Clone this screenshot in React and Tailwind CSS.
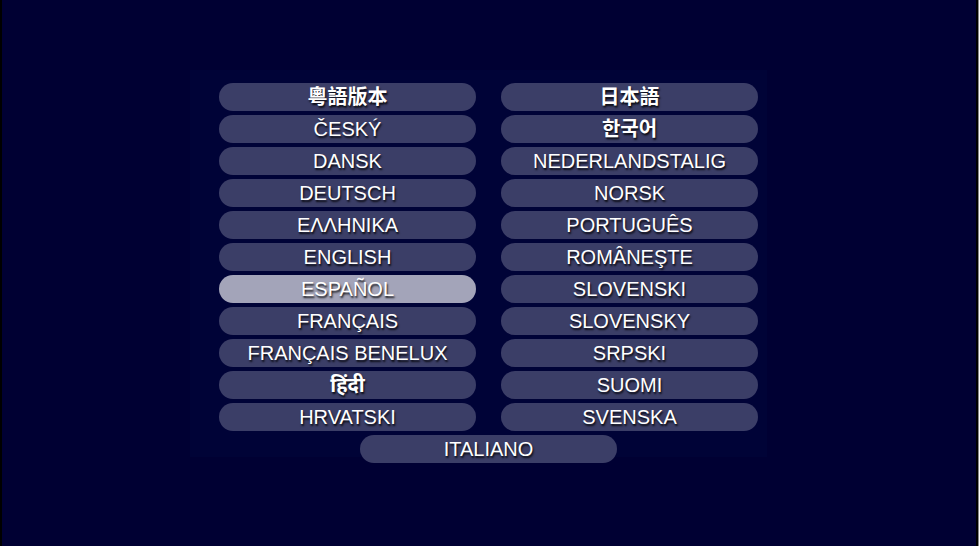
import React from "react";

const left = ["粵語版本", "ČESKÝ", "DANSK", "DEUTSCH", "ΕΛΛΗΝΙΚΑ", "ENGLISH", "ESPAÑOL", "FRANÇAIS", "FRANÇAIS BENELUX", "हिंदी", "HRVATSKI"];
const right = ["日本語", "한국어", "NEDERLANDSTALIG", "NORSK", "PORTUGUÊS", "ROMÂNEŞTE", "SLOVENSKI", "SLOVENSKY", "SRPSKI", "SUOMI", "SVENSKA"];

const bold = new Set(["粵語版本", "日本語", "한국어", "हिंदी"]);

function Btn({ label, selected }) {
  return (
    <div
      className={`h-[28px] w-[257px] rounded-[14px] flex items-center justify-center text-white text-[20px] leading-none [text-shadow:1px_2px_2px_rgba(0,0,0,0.85)] ${
        selected ? "bg-[#a3a4b9]" : "bg-[#3b3e67]"
      } ${bold.has(label) ? "font-bold" : ""}`}
      style={{ fontFamily: '"Liberation Sans", Arial, "Noto Sans CJK SC", "Noto Sans CJK KR", "Noto Sans", sans-serif' }}
    >
      <span>{label}</span>
    </div>
  );
}

export default function App() {
  const rows = [];
  for (let i = 0; i < left.length; i++) {
    rows.push(<Btn key={"l" + i} label={left[i]} selected={left[i] === "ESPAÑOL"} />);
    rows.push(<Btn key={"r" + i} label={right[i]} />);
  }
  return (
    <div className="w-[979px] h-[546px] bg-[#000033] flex overflow-hidden">
      <div className="w-[2px] h-full bg-black" />
      <div className="flex-1 pt-[70px] pl-[188px]">
        <div className="w-[577px] h-[387px] bg-[#000337] pl-[29px] pt-[13px]">
          <div className="grid grid-cols-[257px_257px] gap-x-[25px] gap-y-[4px]">{rows}</div>
          <div className="mt-[4px] w-[539px] flex justify-center">
            <Btn label="ITALIANO" />
          </div>
        </div>
      </div>
      <div className="w-[2px] h-full bg-black" />
      <div className="w-[1px] h-full bg-[#888]" />
    </div>
  );
}
